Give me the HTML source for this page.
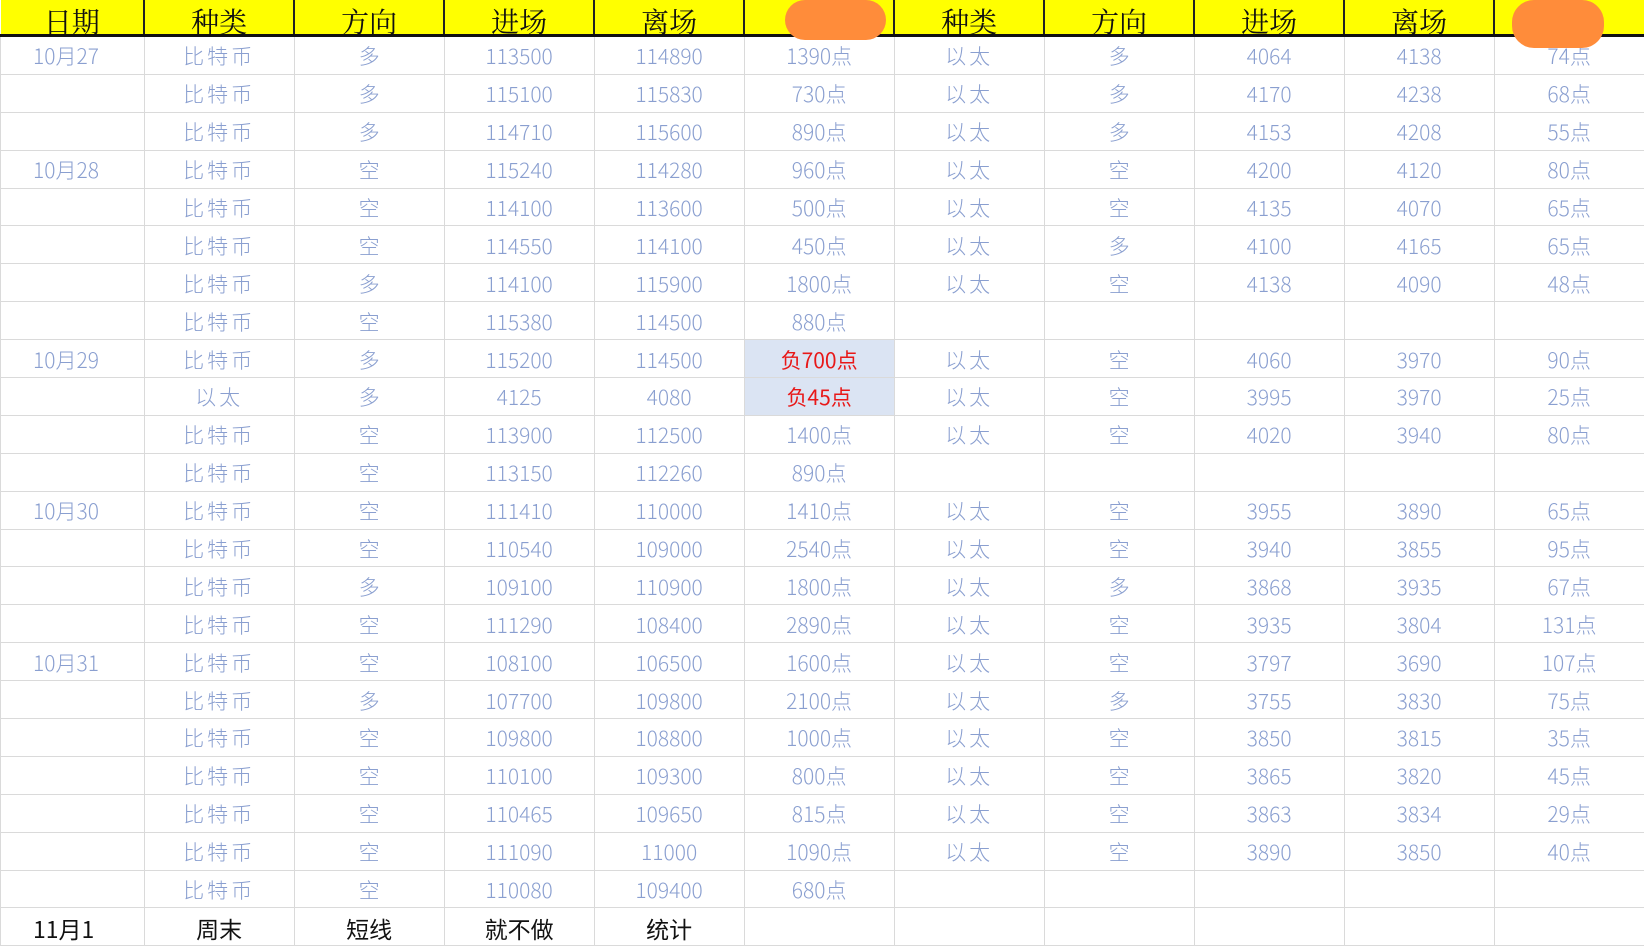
<!DOCTYPE html>
<html><head><meta charset="utf-8"><style>
html,body{margin:0;padding:0;background:#fff;width:1644px;height:944px;overflow:hidden}
table{border-collapse:collapse;table-layout:fixed;position:absolute;left:0;top:0;width:1644px}
td{border:1px solid #dadada;height:33.9px;padding:3px 0 0 0;text-align:center;font-family:"Noto Sans CJK SC",sans-serif;font-weight:300;font-size:21px;line-height:33px;color:#8a9fd0;white-space:nowrap;overflow:hidden}
td.d{text-align:left;padding-left:32px}
tr.h td{background:#ffff00;color:#111;font-family:"Noto Serif CJK SC",serif;font-weight:400;font-size:28px;height:34px;padding:0;border:none;border-right:2px solid #222;border-bottom:3px solid #111;line-height:34px}
tr.h td span{position:relative;top:4px}
td.r{background:#dbe4f3;color:#e81818;font-weight:400}
tr.l td{color:#111;font-size:23px;font-weight:400}
.blob{position:absolute;background:#ff8c3a;border-radius:22px}
.k{letter-spacing:3px}
</style></head><body>
<table>
<colgroup><col style="width:143.6px"><col span="10" style="width:150px"></colgroup>
<tr class="h"><td><span>日期</span></td><td><span>种类</span></td><td><span>方向</span></td><td><span>进场</span></td><td><span>离场</span></td><td></td><td><span>种类</span></td><td><span>方向</span></td><td><span>进场</span></td><td><span>离场</span></td><td style="border-right:none"></td></tr>
<tr><td class="d">10月27</td><td class="k">比特币</td><td>多</td><td>113500</td><td>114890</td><td>1390点</td><td class="k">以太</td><td>多</td><td>4064</td><td>4138</td><td>74点</td></tr>
<tr><td></td><td class="k">比特币</td><td>多</td><td>115100</td><td>115830</td><td>730点</td><td class="k">以太</td><td>多</td><td>4170</td><td>4238</td><td>68点</td></tr>
<tr><td></td><td class="k">比特币</td><td>多</td><td>114710</td><td>115600</td><td>890点</td><td class="k">以太</td><td>多</td><td>4153</td><td>4208</td><td>55点</td></tr>
<tr><td class="d">10月28</td><td class="k">比特币</td><td>空</td><td>115240</td><td>114280</td><td>960点</td><td class="k">以太</td><td>空</td><td>4200</td><td>4120</td><td>80点</td></tr>
<tr><td></td><td class="k">比特币</td><td>空</td><td>114100</td><td>113600</td><td>500点</td><td class="k">以太</td><td>空</td><td>4135</td><td>4070</td><td>65点</td></tr>
<tr><td></td><td class="k">比特币</td><td>空</td><td>114550</td><td>114100</td><td>450点</td><td class="k">以太</td><td>多</td><td>4100</td><td>4165</td><td>65点</td></tr>
<tr><td></td><td class="k">比特币</td><td>多</td><td>114100</td><td>115900</td><td>1800点</td><td class="k">以太</td><td>空</td><td>4138</td><td>4090</td><td>48点</td></tr>
<tr><td></td><td class="k">比特币</td><td>空</td><td>115380</td><td>114500</td><td>880点</td><td></td><td></td><td></td><td></td><td></td></tr>
<tr><td class="d">10月29</td><td class="k">比特币</td><td>多</td><td>115200</td><td>114500</td><td class="r">负700点</td><td class="k">以太</td><td>空</td><td>4060</td><td>3970</td><td>90点</td></tr>
<tr><td></td><td class="k">以太</td><td>多</td><td>4125</td><td>4080</td><td class="r">负45点</td><td class="k">以太</td><td>空</td><td>3995</td><td>3970</td><td>25点</td></tr>
<tr><td></td><td class="k">比特币</td><td>空</td><td>113900</td><td>112500</td><td>1400点</td><td class="k">以太</td><td>空</td><td>4020</td><td>3940</td><td>80点</td></tr>
<tr><td></td><td class="k">比特币</td><td>空</td><td>113150</td><td>112260</td><td>890点</td><td></td><td></td><td></td><td></td><td></td></tr>
<tr><td class="d">10月30</td><td class="k">比特币</td><td>空</td><td>111410</td><td>110000</td><td>1410点</td><td class="k">以太</td><td>空</td><td>3955</td><td>3890</td><td>65点</td></tr>
<tr><td></td><td class="k">比特币</td><td>空</td><td>110540</td><td>109000</td><td>2540点</td><td class="k">以太</td><td>空</td><td>3940</td><td>3855</td><td>95点</td></tr>
<tr><td></td><td class="k">比特币</td><td>多</td><td>109100</td><td>110900</td><td>1800点</td><td class="k">以太</td><td>多</td><td>3868</td><td>3935</td><td>67点</td></tr>
<tr><td></td><td class="k">比特币</td><td>空</td><td>111290</td><td>108400</td><td>2890点</td><td class="k">以太</td><td>空</td><td>3935</td><td>3804</td><td>131点</td></tr>
<tr><td class="d">10月31</td><td class="k">比特币</td><td>空</td><td>108100</td><td>106500</td><td>1600点</td><td class="k">以太</td><td>空</td><td>3797</td><td>3690</td><td>107点</td></tr>
<tr><td></td><td class="k">比特币</td><td>多</td><td>107700</td><td>109800</td><td>2100点</td><td class="k">以太</td><td>多</td><td>3755</td><td>3830</td><td>75点</td></tr>
<tr><td></td><td class="k">比特币</td><td>空</td><td>109800</td><td>108800</td><td>1000点</td><td class="k">以太</td><td>空</td><td>3850</td><td>3815</td><td>35点</td></tr>
<tr><td></td><td class="k">比特币</td><td>空</td><td>110100</td><td>109300</td><td>800点</td><td class="k">以太</td><td>空</td><td>3865</td><td>3820</td><td>45点</td></tr>
<tr><td></td><td class="k">比特币</td><td>空</td><td>110465</td><td>109650</td><td>815点</td><td class="k">以太</td><td>空</td><td>3863</td><td>3834</td><td>29点</td></tr>
<tr><td></td><td class="k">比特币</td><td>空</td><td>111090</td><td>11000</td><td>1090点</td><td class="k">以太</td><td>空</td><td>3890</td><td>3850</td><td>40点</td></tr>
<tr><td></td><td class="k">比特币</td><td>空</td><td>110080</td><td>109400</td><td>680点</td><td></td><td></td><td></td><td></td><td></td></tr>
<tr class="l"><td class="d">11月1</td><td>周末</td><td>短线</td><td>就不做</td><td>统计</td><td></td><td></td><td></td><td></td><td></td><td></td></tr>
</table>
<div class="blob" style="left:785px;top:0;width:101px;height:40px"></div>
<div class="blob" style="left:1512px;top:0;width:92px;height:48px"></div>
</body></html>
